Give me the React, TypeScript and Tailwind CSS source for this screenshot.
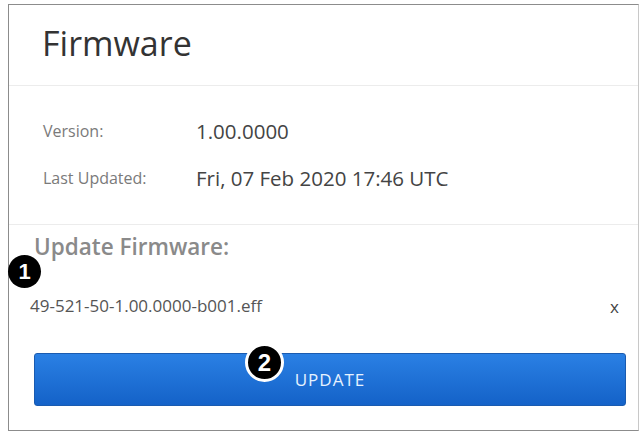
import React from 'react';

const Badge: React.FC<{ n: string; className: string }> = ({ n, className }) => (
  <div
    className={`absolute flex items-center justify-center rounded-full bg-black text-white font-bold ${className}`}
    style={{ fontFamily: '"Liberation Sans", Arial, sans-serif' }}
  >
    {n}
  </div>
);

const App: React.FC = () => {
  return (
    <div className="w-[642px] h-[431px] bg-white pt-[4px] pl-[8px]" style={{ fontFamily: '"Open Sans", "Noto Sans", sans-serif' }}>
      <div className="relative w-[631px] h-[427px] border border-[#8c8c8c] border-r-[#c8c8c8] bg-white flex flex-col">
        {/* Header */}
        <div className="h-[81px] flex items-center px-[33px] border-b border-[#ececec]">
          <h1 className="text-[34px] text-[#333] font-normal leading-none -mt-[5px]">Firmware</h1>
        </div>

        {/* Info */}
        <div className="h-[139px] px-[34px] pt-[34px] border-b border-[#ececec]">
          <div className="flex items-center h-[22px]">
            <span className="w-[153px] text-[16px] text-[#7a7a7a]">Version:</span>
            <span className="text-[20.5px] text-[#444]">1.00.0000</span>
          </div>
          <div className="flex items-center h-[22px] mt-[25px]">
            <span className="w-[153px] text-[16px] text-[#7a7a7a]">Last Updated:</span>
            <span className="text-[20.5px] text-[#444]">Fri, 07 Feb 2020 17:46 UTC</span>
          </div>
        </div>

        {/* Update */}
        <div className="flex-1 px-[25px] pt-[10px]">
          <div className="text-[22.5px] font-semibold text-[#8a8a8a] leading-[24px]">Update Firmware:</div>
          <div className="flex items-center justify-between mt-[35px] -ml-[4px] -mr-[6px]">
            <span className="text-[17px] text-[#555] leading-[24px]">49-521-50-1.00.0000-b001.eff</span>
            <span className="text-[17px] text-[#444] leading-none">x</span>
          </div>
          <button className="mt-[35px] w-[592px] h-[53px] rounded-[3px] bg-gradient-to-b from-[#2a80e4] to-[#1462c8] border border-[#1a5bb0] text-[#e6f2ff] text-[17px] tracking-[0.06em]">
            UPDATE
          </button>
        </div>

        <Badge n="1" className="left-[-1px] top-[250px] w-[33px] h-[33px] text-[22px]" />
        <Badge n="2" className="left-[236px] top-[338px] w-[39px] h-[39px] text-[24px] border-[3px] border-white" />
      </div>
    </div>
  );
};

export default App;
